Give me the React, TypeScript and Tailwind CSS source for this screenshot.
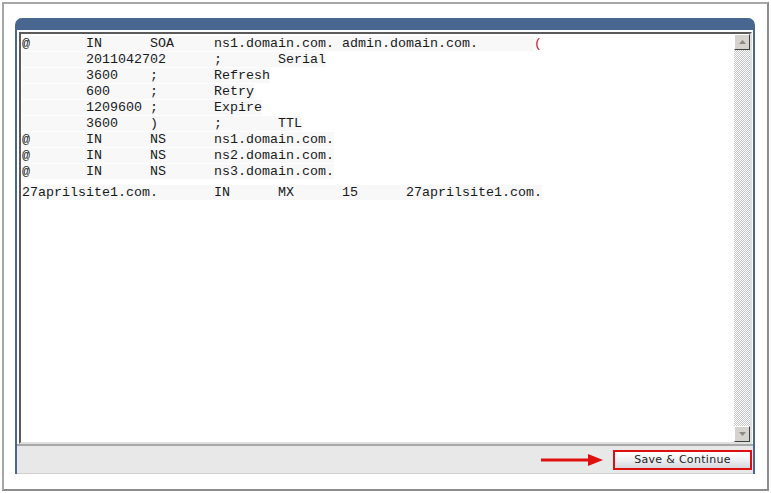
import React from "react";

const lines: { text: string; paren?: boolean; gap?: boolean }[] = [
  { text: "@\tIN\tSOA\tns1.domain.com. admin.domain.com.\t", paren: true },
  { text: "\t2011042702\t;\tSerial" },
  { text: "\t3600\t;\tRefresh" },
  { text: "\t600\t;\tRetry" },
  { text: "\t1209600\t;\tExpire" },
  { text: "\t3600\t)\t;\tTTL" },
  { text: "@\tIN\tNS\tns1.domain.com." },
  { text: "@\tIN\tNS\tns2.domain.com." },
  { text: "@\tIN\tNS\tns3.domain.com." },
  { text: "27aprilsite1.com.\tIN\tMX\t15\t27aprilsite1.com.", gap: true },
];

export default function App() {
  return (
    <div className="w-[771px] h-[493px] bg-white p-[2px]">
      {/* outer frame */}
      <div className="h-full border-2 border-[#a6a6a6] border-r-[#8c8c8c] border-b-[#8c8c8c] pl-[11px] pr-[12px] pt-[14px] pb-[15px]">
        <div className="h-full flex flex-col rounded-t-[7px] bg-[#48668f] border-x-2 border-[#48668f]">
          {/* header strip */}
          <div className="h-[12px] shrink-0" />
          <div className="flex-1 flex flex-col bg-white pt-[2px]">
            {/* textarea */}
            <div className="flex-1 flex ml-[2px] mr-[1px] border-2 border-t-[#5a5a5a] border-l-[#5a5a5a] border-r-[#e0e0e0] border-b-[#e0e0e0] bg-white">
              <pre
                className="flex-1 pl-[1px] pt-[2px] text-[13.33px] leading-[16px] text-[#1a1a1a] [tab-size:8]"
                style={{ fontFamily: '"Liberation Mono", "Courier New", monospace' }}
              >
                {lines.map((l, i) => (
                  <div key={i} className={l.gap ? "mt-[5px]" : ""}>
                    <span className="bg-[#f8f8f8]">{l.text}</span>
                    {l.paren && <span className="text-[#c8102e]">(</span>}
                  </div>
                ))}
              </pre>
              {/* scrollbar */}
              <div className="w-[16px] flex flex-col bg-[repeating-conic-gradient(#c4c4c4_0%_25%,#ffffff_0%_50%)] bg-[length:2px_2px]">
                <div className="h-[16px] flex items-center justify-center bg-[#d6d3ce] border border-t-white border-l-white border-r-[#404040] border-b-[#404040]">
                  <svg width="7" height="4" viewBox="0 0 7 4">
                    <polygon points="0,4 7,4 3.5,0" fill="#8a8a8a" />
                  </svg>
                </div>
                <div className="flex-1" />
                <div className="h-[16px] flex items-center justify-center bg-[#d6d3ce] border border-t-white border-l-white border-r-[#404040] border-b-[#404040]">
                  <svg width="7" height="4" viewBox="0 0 7 4">
                    <polygon points="0,0 7,0 3.5,4" fill="#8a8a8a" />
                  </svg>
                </div>
              </div>
            </div>
            {/* footer bar */}
            <div className="h-[30px] shrink-0 flex items-center justify-end gap-[10px] pr-[1px] bg-[#e8e8e8] border-t-2 border-t-[#a8a8a8] border-b border-b-[#d0d0d0]">
              <svg width="62" height="12" viewBox="0 0 62 12">
                <rect x="0" y="4.5" width="50" height="3" fill="#e01010" />
                <polygon points="47,0 62,6 47,12" fill="#e01010" />
              </svg>
              <button
                className="w-[139px] h-[20px] border-2 border-[#dd1010] bg-gradient-to-b from-white via-[#eef0f3] to-[#d5d8de] text-[11px] text-[#222] tracking-[0.3px]"
                style={{ fontFamily: '"DejaVu Sans", Verdana, sans-serif' }}
              >
                Save &amp; Continue
              </button>
            </div>
          </div>
        </div>
      </div>
    </div>
  );
}
